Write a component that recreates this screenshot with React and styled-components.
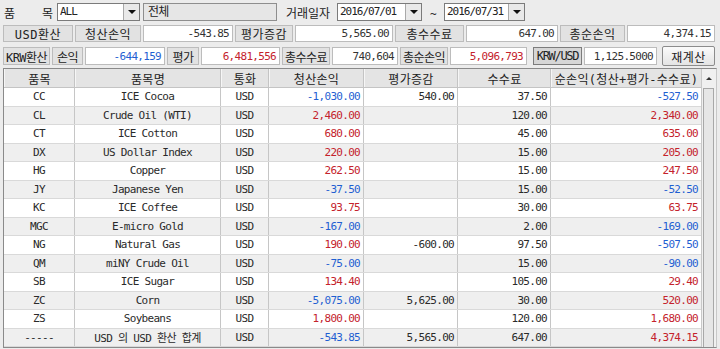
import styled, { createGlobalStyle } from "styled-components";

const GlobalStyle = createGlobalStyle`
  html, body { margin: 0; padding: 0; }
  body {
    background: #ececec;
    font-family: "DejaVu Sans Mono", "Noto Sans CJK KR", monospace;
    font-size: 11px;
    letter-spacing: -0.7px;
    color: #222;
    overflow: hidden;
  }
`;

const BLUE = "#1f5fd2";
const RED = "#c4222c";

const Screen = styled.div`
  width: 720px;
  height: 349px;
  overflow: hidden;
  box-sizing: border-box;
  padding: 3px 0 0 3px;
  display: flex;
  flex-direction: column;
`;

const Bar = styled.div`
  display: flex;
  align-items: center;
  gap: 2px;
  height: ${(p) => p.h}px;
  margin-bottom: ${(p) => p.mb}px;
`;

const Caption = styled.div`
  width: ${(p) => p.w}px;
  margin-left: ${(p) => p.ml || 0}px;
  display: flex;
  justify-content: ${(p) => (p.spread ? "space-between" : "flex-start")};
  padding-left: 1px;
  box-sizing: border-box;
  font-size: 12px;
  letter-spacing: 0;
`;

const Combo = styled.div`
  display: flex;
  width: ${(p) => p.w}px;
  height: 18px;
  margin-left: ${(p) => p.ml || 0}px;
  box-sizing: border-box;
  border: 1px solid #7b7b7b;
  background: #fff;
`;

const ComboText = styled.div`
  flex: 1;
  padding-left: 2px;
  line-height: 16px;
  letter-spacing: -1px;
`;

const DropBtn = styled.div`
  width: 15px;
  border-left: 1px solid #a9a9a9;
  background: #e9e9e9;
  display: flex;
  align-items: center;
  justify-content: center;
  &::after {
    content: "";
    border-left: 4px solid transparent;
    border-right: 4px solid transparent;
    border-top: 4px solid #111;
  }
`;

const ReadBox = styled.div`
  width: ${(p) => p.w}px;
  height: 18px;
  margin-left: 1px;
  box-sizing: border-box;
  border: 1px solid #8e8e8e;
  background: #e6e6e6;
  padding-left: 4px;
  line-height: 16px;
  font-size: 12px;
`;

const Tilde = styled.div`
  width: 18px;
  text-align: center;
  margin-top: 4px;
`;

const Tag = styled.div`
  width: ${(p) => p.w}px;
  height: ${(p) => p.h || 17}px;
  margin-left: ${(p) => p.ml || 0}px;
  box-sizing: border-box;
  border: 1px solid ${(p) => (p.dark ? "#7c7c7c" : "#bcbcbc")};
  background: ${(p) => (p.dark ? "#d6d6d6" : "#e2e2e2")};
  display: flex;
  align-items: center;
  justify-content: center;
  white-space: nowrap;
  overflow: hidden;
  font-size: 12px;
  letter-spacing: ${(p) => (p.dark ? "-1.3px" : p.tight ? "-0.6px" : "0.5px")};
`;

const Value = styled.div`
  width: ${(p) => p.w}px;
  height: ${(p) => p.h || 17}px;
  box-sizing: border-box;
  border: 1px solid #bcbcbc;
  background: #fff;
  color: ${(p) => p.c || "#333"};
  display: flex;
  align-items: center;
  justify-content: flex-end;
  padding-right: 3px;
  white-space: nowrap;
`;

const Button = styled.div`
  width: 53px;
  height: 20px;
  margin-left: 3px;
  box-sizing: border-box;
  border: 1px solid #8c8c8c;
  border-radius: 2px;
  background: linear-gradient(#fbfbfb, #e4e4e4);
  display: flex;
  align-items: center;
  justify-content: center;
  font-size: 12px;
  letter-spacing: 0.5px;
`;

const Grid = styled.div`
  display: flex;
  width: 714px;
  border: 1px solid #8a8a8a;
  border-right-color: #c8c8c8;
  box-sizing: border-box;
  background: #fff;
`;

const Table = styled.div`
  display: flex;
  flex-direction: column;
  width: 697px;
`;

const COLS = "71px 146px 48px 95px 94px 93px 150px";

const HeadRow = styled.div`
  display: grid;
  grid-template-columns: ${COLS};
  height: 18px;
  background: #e4e4e4;
  border-bottom: 1px solid #c4c4c4;
`;

const HeadCell = styled.div`
  display: flex;
  align-items: center;
  justify-content: center;
  border-right: 1px solid #c4c4c4;
  border-left: 1px solid #f6f6f6;
  font-size: 12px;
  letter-spacing: 0.3px;
  white-space: nowrap;
  &:last-child { border-right: none; }
`;

const Row = styled.div`
  display: grid;
  grid-template-columns: ${COLS};
  height: 18.5px;
  box-sizing: border-box;
  background: ${(p) => (p.alt ? "#efefef" : "#fff")};
  border-bottom: 1px solid #d9d9d9;
`;

const Cell = styled.div`
  display: flex;
  align-items: center;
  justify-content: ${(p) => (p.num ? "flex-end" : "center")};
  padding-right: ${(p) => (p.num ? "3px" : "0")};
  border-right: 1px solid #c6c6c6;
  color: ${(p) => p.c || "#2a2a2a"};
  white-space: nowrap;
  overflow: hidden;
  &:last-child { border-right: none; }
`;

const Scroll = styled.div`
  width: 16px;
  display: flex;
  flex-direction: column;
  border-left: 1px solid #c8c8c8;
  background: #f0f0f0;
`;

const ArrowUp = styled.div`
  height: 18px;
  display: flex;
  align-items: center;
  justify-content: center;
  &::after {
    content: "";
    border-left: 3px solid transparent;
    border-right: 3px solid transparent;
    border-bottom: 3px solid #333;
  }
`;

const Thumb = styled.div`
  flex: 1;
  margin: 1px 2px 0 1px;
  border: 1px solid #a8a8a8;
  border-bottom: none;
  background: #e6e6e6;
`;

const rows = [
  ["CC", "ICE Cocoa", "-1,030.00", "540.00", "37.50", "-527.50"],
  ["CL", "Crude Oil (WTI)", "2,460.00", "", "120.00", "2,340.00"],
  ["CT", "ICE Cotton", "680.00", "", "45.00", "635.00"],
  ["DX", "US Dollar Index", "220.00", "", "15.00", "205.00"],
  ["HG", "Copper", "262.50", "", "15.00", "247.50"],
  ["JY", "Japanese Yen", "-37.50", "", "15.00", "-52.50"],
  ["KC", "ICE Coffee", "93.75", "", "30.00", "63.75"],
  ["MGC", "E-micro Gold", "-167.00", "", "2.00", "-169.00"],
  ["NG", "Natural Gas", "190.00", "-600.00", "97.50", "-507.50"],
  ["QM", "miNY Crude Oil", "-75.00", "", "15.00", "-90.00"],
  ["SB", "ICE Sugar", "134.40", "", "105.00", "29.40"],
  ["ZC", "Corn", "-5,075.00", "5,625.00", "30.00", "520.00"],
  ["ZS", "Soybeans", "1,800.00", "", "120.00", "1,680.00"],
  ["-----", "USD 의 USD 환산 합계", "-543.85", "5,565.00", "647.00", "4,374.15"],
];

const signColor = (v) => (v.startsWith("-") ? BLUE : RED);

export default function App() {
  return (
    <Screen>
      <GlobalStyle />
      <Bar h={18} mb={4}>
        <Caption w={50} spread>
          <span>품</span>
          <span>목</span>
        </Caption>
        <Combo w={83} ml={2}>
          <ComboText>ALL</ComboText>
          <DropBtn />
        </Combo>
        <ReadBox w={134}>전체</ReadBox>
        <Caption w={50} ml={6}>거래일자</Caption>
        <Combo w={85}>
          <ComboText>2016/07/01</ComboText>
          <DropBtn />
        </Combo>
        <Tilde>~</Tilde>
        <Combo w={81}>
          <ComboText>2016/07/31</ComboText>
          <DropBtn />
        </Combo>
      </Bar>

      <Bar h={17} mb={4}>
        <Tag w={70}>USD환산</Tag>
        <Tag w={66}>청산손익</Tag>
        <Value w={90}>-543.85</Value>
        <Tag w={58}>평가증감</Tag>
        <Value w={98}>5,565.00</Value>
        <Tag w={69}>총수수료</Tag>
        <Value w={92}>647.00</Value>
        <Tag w={65}>총순손익</Tag>
        <Value w={88}>4,374.15</Value>
      </Bar>

      <Bar h={20} mb={2}>
        <Tag w={47} h={18} tight>KRW환산</Tag>
        <Tag w={31} h={18} tight>손익</Tag>
        <Value w={80} h={18} c={BLUE}>-644,159</Value>
        <Tag w={32} h={18} tight>평가</Tag>
        <Value w={79} h={18} c={RED}>6,481,556</Value>
        <Tag w={48} h={18} tight>총수수료</Tag>
        <Value w={66} h={18}>740,604</Value>
        <Tag w={48} h={18} tight>총순손익</Tag>
        <Value w={77} h={18} c={RED}>5,096,793</Value>
        <Tag w={49} h={18} ml={4} dark>KRW/USD</Tag>
        <Value w={73} h={18}>1,125.5000</Value>
        <Button>재계산</Button>
      </Bar>

      <Grid>
        <Table>
          <HeadRow>
            <HeadCell>품목</HeadCell>
            <HeadCell>품목명</HeadCell>
            <HeadCell>통화</HeadCell>
            <HeadCell>청산손익</HeadCell>
            <HeadCell>평가증감</HeadCell>
            <HeadCell>수수료</HeadCell>
            <HeadCell>순손익(청산+평가-수수료)</HeadCell>
          </HeadRow>
          {rows.map(([code, name, pnl, evalv, fee, net], i) => (
            <Row key={code} alt={i % 2 === 1}>
              <Cell>{code}</Cell>
              <Cell>{name}</Cell>
              <Cell>USD</Cell>
              <Cell num c={signColor(pnl)}>{pnl}</Cell>
              <Cell num>{evalv}</Cell>
              <Cell num>{fee}</Cell>
              <Cell num c={signColor(net)}>{net}</Cell>
            </Row>
          ))}
        </Table>
        <Scroll>
          <ArrowUp />
          <Thumb />
        </Scroll>
      </Grid>
    </Screen>
  );
}
